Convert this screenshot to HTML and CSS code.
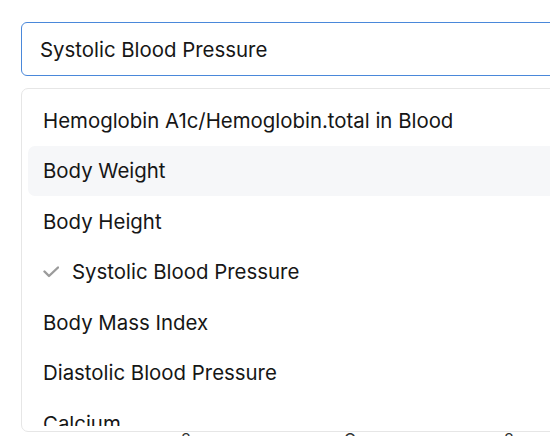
FILE: index.html
```html
<!DOCTYPE html>
<html>
<head>
<meta charset="utf-8">
<link rel="stylesheet" href="styles.css">
</head>
<body>
<div class="page">
  <div class="field">
    <div class="input">Systolic Blood Pressure</div>
    <div class="under">
      <span class="u1">8</span><span class="u2">O</span><span class="u3">8</span>
    </div>
    <div class="menu">
      <div class="list">
        <div class="opt">Hemoglobin A1c/Hemoglobin.total in Blood</div>
        <div class="opt hover">Body Weight</div>
        <div class="opt">Body Height</div>
        <div class="opt selected">
          <svg class="check" width="16" height="12" viewBox="0 0 16 12"><path d="M1.5 5.5 L6 10 L15 1.5" fill="none" stroke="#9b9b9b" stroke-width="2.4" stroke-linecap="round" stroke-linejoin="round"/></svg>
          <span>Systolic Blood Pressure</span>
        </div>
        <div class="opt">Body Mass Index</div>
        <div class="opt">Diastolic Blood Pressure</div>
        <div class="opt">Calcium</div>
      </div>
    </div>
  </div>
</div>
</body>
</html>
```
FILE: styles.css
```css
html, body {
  margin: 0;
  padding: 0;
  background: #ffffff;
  overflow: hidden;
  width: 550px;
  height: 436px;
}
.page {
  padding: 22px 0 0 21px;
  font-family: Inter, "Noto Sans", sans-serif;
  color: #161616;
}
.field {
  position: relative;
  width: 600px;
}
.input {
  box-sizing: border-box;
  height: 54px;
  border: 1px solid #4a88da;
  border-radius: 6px;
  padding: 0 18px;
  display: flex;
  align-items: center;
  font-size: 20.4px;
}
.under {
  position: relative;
  height: 400px;
  font-size: 16px;
  color: #333;
}
.under span {
  position: absolute;
  top: 353px;
}
.u1 { left: 160px; }
.u2 { left: 323px; }
.u3 { left: 483px; }
.menu {
  position: absolute;
  top: 66px;
  left: 0;
  box-sizing: border-box;
  width: 600px;
  height: 344px;
  border: 1px solid #e6e6e6;
  border-radius: 7px;
  background: #fff;
  padding: 6px 6px 0 6px;
}
.list {
  height: 331px;
  overflow: hidden;
}
.opt {
  height: 50.5px;
  display: flex;
  align-items: center;
  padding-left: 15px;
  font-size: 20.4px;
  border-radius: 7px;
}
.opt.hover {
  background: #f6f7f9;
}
.check {
  margin-right: 13px;
  margin-top: 1px;
}
```
